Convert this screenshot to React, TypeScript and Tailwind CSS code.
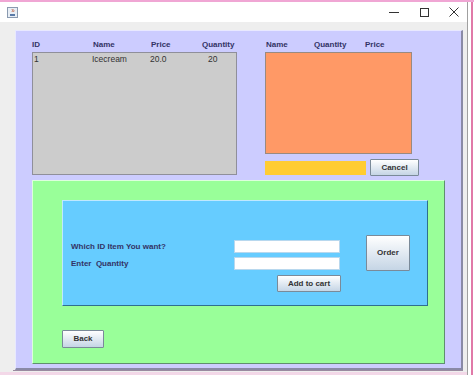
import React from "react";

const btn =
  "flex items-center justify-center border border-[#7a8a99] bg-gradient-to-b from-white to-[#c5d5e5] text-[8px] font-bold text-[#333333] rounded-[1px]";

export default function App() {
  return (
    <div
      className="w-[474px] h-[375px] overflow-hidden bg-white flex flex-col"
      style={{ fontFamily: '"Liberation Sans", Arial, sans-serif' }}
    >
      <div className="h-[2px] bg-[#f0a6d4] shrink-0" />
      <div className="flex flex-1 min-h-0">
        {/* window */}
        <div className="w-[468px] flex flex-col border-r border-[#a0a0a0]">
          {/* title bar */}
          <div className="h-[20px] bg-white flex items-center shrink-0">
            <div className="ml-[7px] w-[11px] h-[11px]">
              <svg width="11" height="11" viewBox="0 0 11 11">
                <rect x="0.5" y="0.5" width="10" height="10" fill="#e8eef5" stroke="#8a9ab0" />
                <path d="M3 7 h5 v2 h-5z" fill="#5a7aa8" />
                <path d="M5 2 q1 1.5 0 3 M6.5 2.5 q1 1.2 0 2.5" stroke="#c06040" strokeWidth="0.8" fill="none" />
              </svg>
            </div>
            <div className="flex-1" />
            <svg width="10" height="10" viewBox="0 0 10 10" className="mr-[20px]">
              <path d="M0 5.5 H10" stroke="#333" strokeWidth="1" />
            </svg>
            <svg width="10" height="10" viewBox="0 0 10 10" className="mr-[20px]">
              <rect x="1.5" y="1.5" width="8" height="8" stroke="#333" strokeWidth="1" fill="none" />
            </svg>
            <svg width="10" height="10" viewBox="0 0 10 10" className="mr-[8px]">
              <path d="M0.5 0.5 L9.5 9.5 M9.5 0.5 L0.5 9.5" stroke="#333" strokeWidth="1" />
            </svg>
          </div>
          {/* content */}
          <div className="flex-1 bg-[#eeeeee] pl-[15px] pr-[4px] pt-[8px]">
            <div className="h-[340px] bg-[#ccccff] border-r-2 border-b-2 border-[#8a8aa6] border-t border-l border-t-[#e8e8ff] border-l-[#e8e8ff] pl-[16px] pt-[7px] flex flex-col">
              {/* top row */}
              <div className="flex">
                {/* left table */}
                <div className="w-[205px]">
                  <div className="flex h-[14px] items-center text-[8px] font-bold text-[#333366]">
                    <span className="w-[61px]">ID</span>
                    <span className="w-[58px]">Name</span>
                    <span className="w-[51px]">Price</span>
                    <span>Quantity</span>
                  </div>
                  <div className="h-[123px] bg-[#cccccc] border border-[#8f8f9a] pl-[1px]">
                    <div className="flex h-[13px] items-center text-[8.5px] text-[#333333]">
                      <span className="w-[58px]">1</span>
                      <span className="w-[58px]">Icecream</span>
                      <span className="w-[58px]">20.0</span>
                      <span>20</span>
                    </div>
                  </div>
                </div>
                {/* right */}
                <div className="ml-[28px] flex flex-col">
                  <div className="flex h-[14px] items-center text-[8px] font-bold text-[#333366] pl-[1px]">
                    <span className="w-[48px]">Name</span>
                    <span className="w-[51px]">Quantity</span>
                    <span>Price</span>
                  </div>
                  <div className="w-[147px] h-[102px] bg-[#ff9966] border border-[#9a8a80]" />
                  <div className="flex items-center mt-[5px]">
                    <div className="w-[101px] h-[14px] bg-[#ffcc33]" />
                    <div className={`${btn} ml-[4px] w-[49px] h-[17px]`}>Cancel</div>
                  </div>
                </div>
              </div>
              {/* green */}
              <div className="mt-[4px] w-[413px] h-[184px] bg-[#99ff99] border border-t-[#ddffdd] border-l-[#ddffdd] border-r-[#5f8f6f] border-b-[#5f8f6f] pt-[19px] pl-[29px] flex flex-col">
                <div className="w-[366px] h-[106px] bg-[#66ccff] border border-t-[#bfe8ff] border-l-[#bfe8ff] border-r-[#2f6f8f] border-b-[#2f6f8f] pl-[8px] pt-[34px] flex">
                  <div className="flex flex-col mt-[5px]">
                    <div className="flex items-center h-[13px]">
                      <span className="w-[163px] text-[8px] font-bold text-[#333366]">Which ID Item You want?</span>
                      <div className="w-[106px] h-[13px] bg-white border border-[#b8d8ee]" />
                    </div>
                    <div className="flex items-center h-[13px] mt-[4px]">
                      <span className="w-[163px] text-[8px] font-bold text-[#333366]">Enter&nbsp; Quantity</span>
                      <div className="w-[106px] h-[13px] bg-white border border-[#b8d8ee]" />
                    </div>
                    <div className="flex justify-end mt-[5px]">
                      <div className={`${btn} w-[64px] h-[17px] -mr-px`}>Add to cart</div>
                    </div>
                  </div>
                  <div className={`${btn} ml-[26px] w-[44px] h-[36px]`}>Order</div>
                </div>
                <div className={`${btn} mt-[24px] w-[42px] h-[18px]`}>Back</div>
              </div>
            </div>
            <div className="h-[1px] bg-[#9a8aa0] -ml-[2px]" />
          </div>
          <div className="h-[3px] bg-[#f3d8e8] shrink-0" />
        </div>
        <div className="w-[3px] bg-white" />
        <div className="w-[2px] bg-[#e07aa8]" />
        <div className="flex-1 bg-white" />
      </div>
    </div>
  );
}
